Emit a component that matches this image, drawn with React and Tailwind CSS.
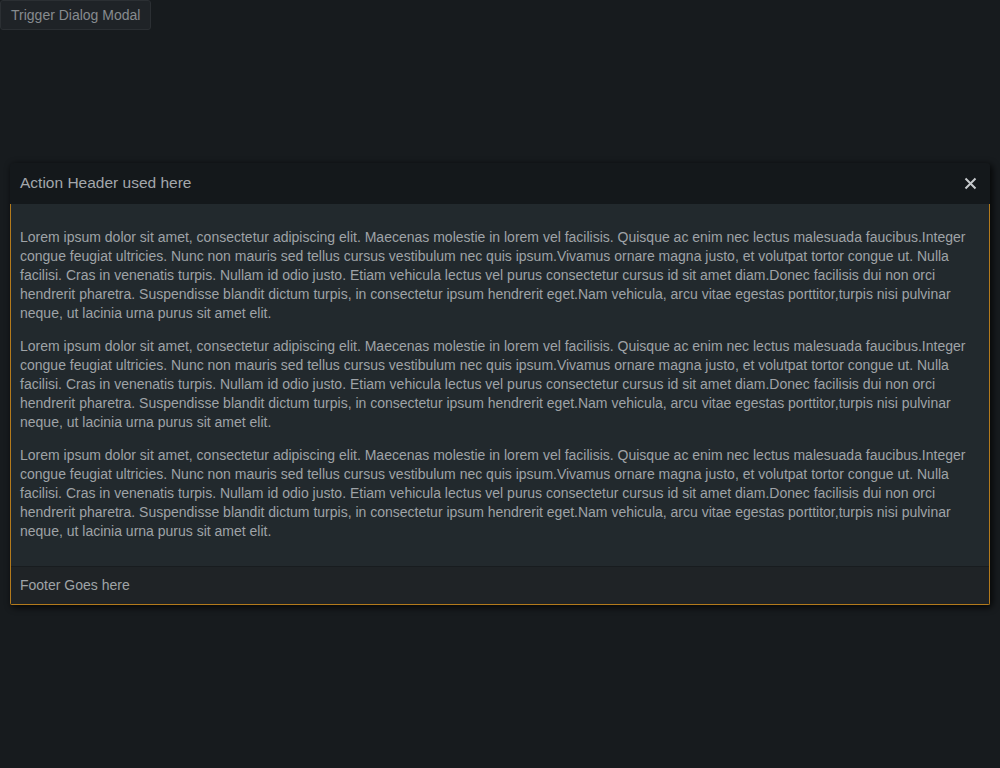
import React from "react";

const LOREM =
  "Lorem ipsum dolor sit amet, consectetur adipiscing elit. Maecenas molestie in lorem vel facilisis. Quisque ac enim nec lectus malesuada faucibus.Integer congue feugiat ultricies. Nunc non mauris sed tellus cursus vestibulum nec quis ipsum.Vivamus ornare magna justo, et volutpat tortor congue ut. Nulla facilisi. Cras in venenatis turpis. Nullam id odio justo. Etiam vehicula lectus vel purus consectetur cursus id sit amet diam.Donec facilisis dui non orci hendrerit pharetra. Suspendisse blandit dictum turpis, in consectetur ipsum hendrerit eget.Nam vehicula, arcu vitae egestas porttitor,turpis nisi pulvinar neque, ut lacinia urna purus sit amet elit.";

export default function App() {
  return (
    <div
      className="w-[1000px] h-[768px] bg-[#171b1e] text-[#9fa3a7] relative overflow-hidden"
      style={{ fontFamily: '"Liberation Sans", Arial, sans-serif' }}
    >
      <button className="h-[30px] px-[10px] bg-[#1f2327] border border-[#2b2f33] rounded-[3px] text-[14px] text-[#878b8f]">
        Trigger Dialog Modal
      </button>

      <div className="absolute left-[10px] top-[163px] w-[980px] rounded-[4px] shadow-[2px_2px_6px_1px_rgba(0,0,0,0.7)] flex flex-col">
        <div className="h-[41px] bg-[#14181b] rounded-t-[4px] flex items-center justify-between pl-[10px] pr-[13px] pb-[2px]">
          <span className="text-[15.5px] text-[#a3a7ab]">Action Header used here</span>
          <svg width="13" height="13" viewBox="0 0 13 13" className="text-[#c6c9cc] mt-[1px]">
            <path d="M1.5 1.5 L11.5 11.5 M11.5 1.5 L1.5 11.5" stroke="currentColor" strokeWidth="2" />
          </svg>
        </div>
        <div className="border-x border-b border-[#b37a1c] rounded-b-[2px] flex flex-col overflow-hidden">
          <div className="bg-[#22292d] pl-[9px] pr-[10px] pt-[24px] pb-[11px] border-b border-[#181c1f]">
            {[0, 1, 2].map((i) => (
              <p key={i} className="text-[14px] leading-[19px] mb-[14px]">
                {LOREM}
              </p>
            ))}
          </div>
          <div className="h-[37px] bg-[#1f2326] pl-[9px] flex items-center text-[14px]">
            Footer Goes here
          </div>
        </div>
      </div>
    </div>
  );
}
